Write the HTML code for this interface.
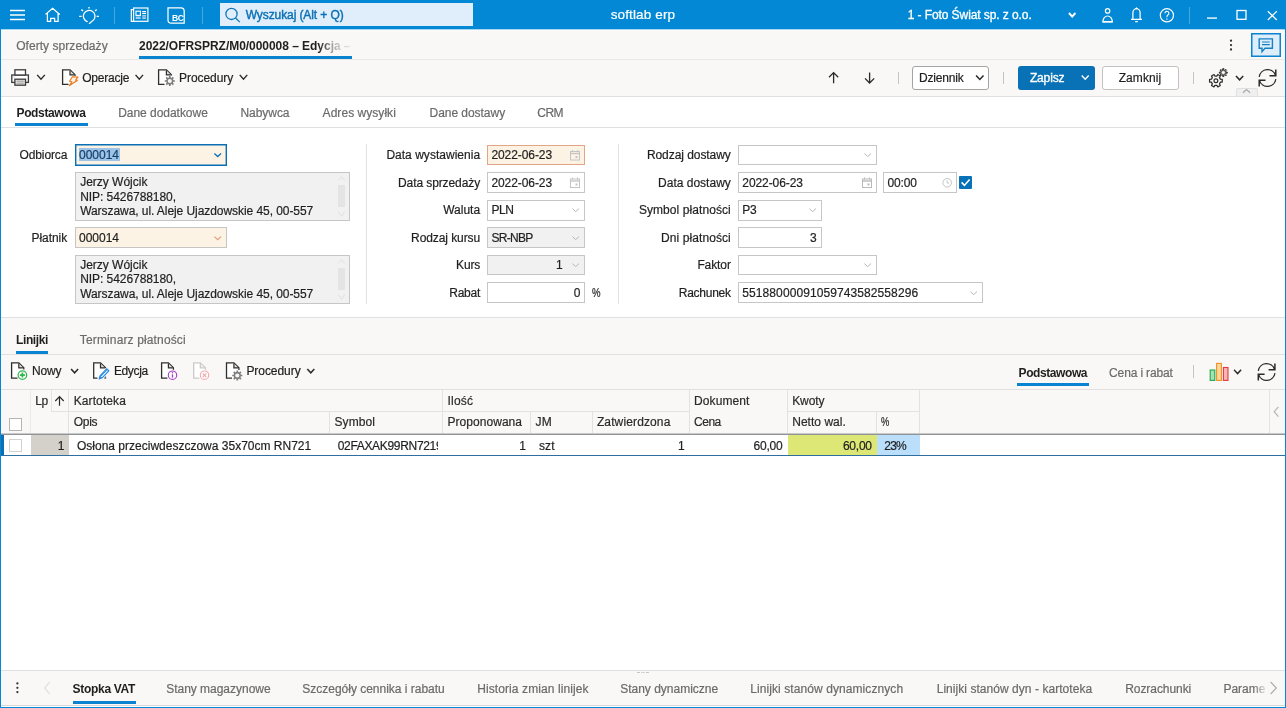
<!DOCTYPE html>
<html lang="pl">
<head>
<meta charset="utf-8">
<title>softlab erp</title>
<style>
*{box-sizing:border-box;margin:0;padding:0}
html,body{width:1286px;height:708px;overflow:hidden;background:#fff}
body{font-family:"Liberation Sans",sans-serif;font-size:12px;color:#1f1f1f;position:relative}
.a,.t{position:absolute}
.t{white-space:nowrap;line-height:16px;height:16px;transform-origin:0 50%;color:#1f1f1f;-webkit-text-stroke:.2px currentColor}
.b{font-weight:bold;-webkit-text-stroke:0}
.med{font-weight:normal;-webkit-text-stroke:.32px currentColor}
.g{color:#6a6a6a}
.hd{color:#2a2a2a}
.w{color:#fff}
.big{font-size:13.5px}
.srch{color:#0a6fb5;-webkit-text-stroke:.4px currentColor}
.fade{-webkit-mask-image:linear-gradient(90deg,#000 0,#000 84.5%,rgba(0,0,0,.7) 88%,rgba(0,0,0,.42) 91%,rgba(0,0,0,.22) 94.5%,rgba(0,0,0,.08) 100%);mask-image:linear-gradient(90deg,#000 0,#000 84.5%,rgba(0,0,0,.7) 88%,rgba(0,0,0,.42) 91%,rgba(0,0,0,.22) 94.5%,rgba(0,0,0,.08) 100%)}
.fadeR{-webkit-mask-image:linear-gradient(90deg,#000 0,#000 72%,transparent 108%);mask-image:linear-gradient(90deg,#000 0,#000 72%,transparent 108%)}
.clip{position:absolute;overflow:hidden;height:16px}
svg{position:absolute;overflow:visible}
.inp{position:absolute;height:22px;border:1px solid #c6c6c6;background:#fff}
.dis{background:#f1f1f1}
.req{background:#fdf3e4}
.ul{position:absolute;height:3px;background:#0a84d0}
.vl{position:absolute;width:1px;background:#e2e2e2}
.hl{position:absolute;height:1px;background:#e2e2e2}
.cb{position:absolute;width:13px;height:13px;background:#fff;border:1px solid #b4b4b4}
</style>
</head>
<body>
<div class="a" style="left:0px;top:0px;width:1286px;height:29px;background:#0288d4;"></div>
<div class="a" style="left:899px;top:0px;width:187px;height:30px;background:#0288d4;border-bottom:1px solid #0273bb"></div>
<div class="a" style="left:220px;top:3px;width:253px;height:23px;background:#dfeefa;"></div>
<div class="a" style="left:114px;top:7px;width:1px;height:17px;background:rgba(255,255,255,.28);"></div>
<div class="a" style="left:202px;top:7px;width:1px;height:17px;background:rgba(255,255,255,.28);"></div>
<div class="a" style="left:1189px;top:7px;width:1px;height:17px;background:rgba(255,255,255,.28);"></div>
<div class="a" style="left:0px;top:29px;width:1286px;height:1px;background:#a6d5f0;"></div>
<div class="a" style="left:0px;top:30px;width:1286px;height:1px;background:#fcfcfc;"></div>
<div class="a" style="left:0px;top:31px;width:1286px;height:29px;background:#f9f8f7;"></div>
<div class="hl" style="left:0px;top:59px;width:1286px;height:1px;background:#e9e8e7"></div>
<div class="ul" style="left:139px;top:56px;width:213px"></div>
<div class="a" style="left:1251px;top:33px;width:30px;height:24px;background:#ddedf9;border:1px solid #0a84d0;box-shadow:inset 0 0 0 .5px #0a84d0"></div>
<div class="a" style="left:0px;top:60px;width:1286px;height:36px;background:#f9f8f7;"></div>
<div class="hl" style="left:0px;top:96px;width:1286px;height:1px;background:#e0e0e0"></div>
<div class="a" style="left:1236px;top:88px;width:22px;height:8px;background:#efefef;border:1px solid #e0e0e0;border-bottom:none;border-radius:2px 2px 0 0"></div>
<div class="vl" style="left:898px;top:72px;height:12px;background:#c4c4c4"></div>
<div class="vl" style="left:1003px;top:72px;height:12px;background:#c4c4c4"></div>
<div class="vl" style="left:1193px;top:72px;height:12px;background:#c4c4c4"></div>
<div class="a" style="left:912px;top:66px;width:77px;height:24px;background:#fff;border:1px solid #a4a4a4;border-radius:3px"></div>
<div class="a" style="left:1018px;top:66px;width:77px;height:24px;background:#0971b5;border-radius:3px"></div>
<div class="a" style="left:1102px;top:66px;width:77px;height:24px;background:#fff;border:1px solid #c2c2c2;border-radius:3px"></div>
<div class="a" style="left:0px;top:97px;width:1286px;height:30px;background:#fff;"></div>
<div class="hl" style="left:0px;top:127px;width:1286px;height:1px;background:#e0e0e0"></div>
<div class="ul" style="left:15px;top:123px;width:73px"></div>
<div class="a" style="left:0px;top:128px;width:1286px;height:189px;background:#fff;"></div>
<div class="hl" style="left:0px;top:317px;width:1286px;height:1px;background:#e0e0e0"></div>
<div class="vl" style="left:366px;top:144px;height:160px;background:#e2e2e2"></div>
<div class="vl" style="left:618px;top:144px;height:160px;background:#e2e2e2"></div>
<div class="inp req" style="left:75px;top:144px;width:152px;height:22px;border-color:#0a6fb5;box-shadow:inset 0 0 0 .4px #0a6fb5"></div>
<div class="a" style="left:79px;top:148px;width:41px;height:13px;background:#9dc3e6;"></div>
<div class="a" style="left:75px;top:172px;width:275px;height:49px;background:#f1f1f1;border:1px solid #c6c6c6"></div>
<div class="inp req" style="left:75px;top:227px;width:152px;height:21px;"></div>
<div class="a" style="left:75px;top:255px;width:275px;height:49px;background:#f1f1f1;border:1px solid #c6c6c6"></div>
<div class="a" style="left:338px;top:185px;width:7px;height:22px;background:#e4e4e4;"></div>
<div class="a" style="left:338px;top:268px;width:7px;height:22px;background:#e4e4e4;"></div>
<div class="inp req" style="left:487px;top:145px;width:98px;height:20px;border-color:#e2a585"></div>
<div class="inp " style="left:487px;top:172px;width:98px;height:21px;"></div>
<div class="inp " style="left:487px;top:200px;width:98px;height:21px;"></div>
<div class="inp dis" style="left:487px;top:227px;width:98px;height:21px;"></div>
<div class="inp dis" style="left:487px;top:255px;width:98px;height:20px;"></div>
<div class="inp " style="left:487px;top:282px;width:98px;height:21px;"></div>
<div class="inp " style="left:738px;top:145px;width:139px;height:20px;"></div>
<div class="inp " style="left:738px;top:172px;width:139px;height:21px;"></div>
<div class="inp " style="left:883px;top:172px;width:74px;height:21px;"></div>
<div class="inp " style="left:738px;top:200px;width:84px;height:21px;"></div>
<div class="inp " style="left:738px;top:227px;width:84px;height:21px;"></div>
<div class="inp " style="left:738px;top:255px;width:139px;height:20px;"></div>
<div class="inp " style="left:738px;top:282px;width:245px;height:21px;"></div>
<div class="a" style="left:959px;top:176px;width:13px;height:13px;background:#0971b5;border-radius:1px"></div>
<div class="a" style="left:0px;top:318px;width:1286px;height:36px;background:#f9f8f7;"></div>
<div class="hl" style="left:0px;top:354px;width:1286px;height:1px;background:#e0e0e0"></div>
<div class="ul" style="left:16px;top:351px;width:32px"></div>
<div class="a" style="left:0px;top:355px;width:1286px;height:34px;background:#f9f8f7;"></div>
<div class="hl" style="left:0px;top:389px;width:1286px;height:1px;background:#e0e0e0"></div>
<div class="ul" style="left:1017px;top:383px;width:72px"></div>
<div class="vl" style="left:1193px;top:365px;height:13px;background:#c4c4c4"></div>
<div class="a" style="left:0px;top:390px;width:1286px;height:44px;background:#f9f8f7;"></div>
<div class="vl" style="left:68px;top:390px;height:44px;background:#e2e2e2"></div>
<div class="vl" style="left:442px;top:390px;height:44px;background:#e2e2e2"></div>
<div class="vl" style="left:689px;top:390px;height:44px;background:#e2e2e2"></div>
<div class="vl" style="left:787px;top:390px;height:44px;background:#e2e2e2"></div>
<div class="vl" style="left:919px;top:390px;height:44px;background:#e2e2e2"></div>
<div class="vl" style="left:30px;top:390px;height:44px;background:#ebebeb"></div>
<div class="vl" style="left:51px;top:390px;height:21px;background:#e2e2e2"></div>
<div class="vl" style="left:329px;top:412px;height:22px;background:#e2e2e2"></div>
<div class="vl" style="left:530px;top:412px;height:22px;background:#e2e2e2"></div>
<div class="vl" style="left:592px;top:412px;height:22px;background:#e2e2e2"></div>
<div class="vl" style="left:876px;top:412px;height:22px;background:#e2e2e2"></div>
<div class="hl" style="left:51px;top:411px;width:638px;height:1px;background:#e2e2e2"></div>
<div class="hl" style="left:787px;top:411px;width:132px;height:1px;background:#e2e2e2"></div>
<div class="vl" style="left:1269px;top:390px;height:44px;background:#e2e2e2"></div>
<div class="a" style="left:0px;top:433px;width:1286px;height:1px;background:#c9c9c9;"></div>
<div class="a" style="left:0px;top:434px;width:1286px;height:1px;background:#8f9496;"></div>
<div class="cb" style="left:9px;top:418px"></div>
<div class="a" style="left:0px;top:435px;width:1286px;height:235px;background:#fff;"></div>
<div class="a" style="left:0px;top:455px;width:1286px;height:1px;background:#2f6f9f;"></div>
<div class="a" style="left:31px;top:435px;width:38px;height:20px;background:#d4d0ca;"></div>
<div class="a" style="left:788px;top:435px;width:89px;height:20px;background:#dce775;"></div>
<div class="a" style="left:877px;top:435px;width:43px;height:20px;background:#bbdefb;"></div>
<div class="a" style="left:1px;top:435px;width:3px;height:20px;background:#0a6fb5;"></div>
<div class="cb" style="left:9px;top:439px;border-color:#d2d2d2"></div>
<div class="hl" style="left:0px;top:670px;width:1286px;height:1px;background:#e0e0e0"></div>
<div class="a" style="left:0px;top:671px;width:1286px;height:35px;background:#f9f8f7;"></div>
<div class="ul" style="left:73px;top:701px;width:63px"></div>
<div class="hl" style="left:0px;top:705px;width:1286px;height:1px;background:#d8d8d8"></div>
<div class="a" style="left:637px;top:672px;width:3px;height:1px;background:#c6c6c6;"></div>
<div class="a" style="left:641px;top:672px;width:4px;height:1px;background:#d4d4d4;"></div>
<div class="a" style="left:646px;top:672px;width:3px;height:1px;background:#c6c6c6;"></div>
<svg class="a" style="left:0;top:0" width="1286" height="708" viewBox="0 0 1286 708" fill="none" ><path d="M10 10.5 H25 M10 19.5 H25" stroke="#fff" stroke-width="1.3"/><path d="M10 15 H25" stroke="#fff" stroke-opacity=".75" stroke-width="2"/><path d="M45.5 14.4 L52.6 8.3 L59.8 14.4 M47.4 13.2 V21.3 H50.7 V18.3 H54.6 V21.3 H58.1 V13.2" stroke="#fff" stroke-width="1.25" stroke-linejoin="miter"/><path d="M87.2 21.6 A5.8 5.8 0 1 1 93.6 19.9 L89.4 23.4" stroke="#fff" stroke-width="1.3" stroke-linecap="round"/><path d="M89 7 V8.4 M81.4 9.6 L83 11 M96.6 9.6 L95.2 11 M79.2 16.4 H81.6 M96.6 16.4 H98.9" stroke="#fff" stroke-width="1.4"/><rect x="133.6" y="8" width="14.3" height="13.3" stroke="#fff" stroke-width="1.2"/><path d="M133.6 9.6 H131.3 V21.3 H133.6" stroke="#fff" stroke-width="1.2"/><rect x="136" y="11.2" width="4.4" height="4.2" stroke="#fff" stroke-width="1.1"/><path d="M142.2 11.6 H146 M142.2 13.5 H146" stroke="#fff" stroke-width="1.1"/><path d="M142.2 15.6 H146 M142.2 17 H146 M142.2 18.4 H146 M135.7 17.1 H140.6 M135.7 18.4 H140.6" stroke="#fff" stroke-opacity=".6" stroke-width="1.1"/><path d="M168 7.9 H181 A3.2 3.2 0 0 1 184.2 11.1 V23.2 H171.2 A3.2 3.2 0 0 1 168 20 Z" stroke="#fff" stroke-width="1.25"/><circle cx="231.5" cy="13.9" r="5.6" stroke="#1277b5" stroke-width="1.3"/><path d="M235.6 18 L239.8 22.1" stroke="#1277b5" stroke-width="1.3"/><path d="M1069 13 L1072.2 16.6 L1075.4 13" stroke="#fff" stroke-width="2" stroke-linejoin="miter"/><circle cx="1107.6" cy="10.9" r="2.2" stroke="#fff" stroke-width="1.2"/><path d="M1102.9 21.6 A4.7 5.6 0 0 1 1112.3 21.6 Z" stroke="#fff" stroke-width="1.2"/><path d="M1102.5 21.8 H1112.7" stroke="#fff" stroke-width="1.6"/><path d="M1132.9 19.2 V13 A3.6 4.4 0 0 1 1140.1 13 V19.2 M1131 19.3 H1142 M1135.2 21.7 H1137.8" stroke="#fff" stroke-width="1.25"/><path d="M1135.6 8.8 L1136.5 7.6 L1137.4 8.8Z" fill="#fff" stroke="#fff" stroke-width=".8"/><circle cx="1166.9" cy="15.3" r="6.6" stroke="#fff" stroke-width="1.2"/><path d="M1164.9 13.3 A2 2 0 1 1 1167.6 15.2 Q1166.9 15.8 1166.9 17.2 M1166.9 18.6 V19.8" stroke="#fff" stroke-width="1.1"/><path d="M1207 18.1 H1217" stroke="#fff" stroke-opacity=".85" stroke-width="1.6"/><rect x="1237" y="10.5" width="9" height="8.8" stroke="#fff" stroke-width="1.3"/><path d="M1267.8 11.2 L1276.8 20 M1276.8 11.2 L1267.8 20" stroke="#fff" stroke-width="1.2"/><circle cx="1231" cy="40.7" r="1.15" fill="#333"/><circle cx="1231" cy="45.1" r="1.15" fill="#333"/><circle cx="1231" cy="49.5" r="1.15" fill="#333"/><path d="M1259.2 38.9 H1272.4 V48.3 H1265 L1262 51.6 V48.3 H1259.2Z" stroke="#1580c4" stroke-width="1.4" stroke-linejoin="miter"/><path d="M1262 42 H1269.8 M1262 44.6 H1269.8" stroke="#1580c4" stroke-width="1.1"/><rect x="11.8" y="75" width="16.6" height="7.4" fill="#fff" stroke="#3a3a3a" stroke-width="1.3"/><rect x="14.9" y="69.8" width="10.6" height="5.2" fill="#fff" stroke="#3a3a3a" stroke-width="1.3"/><rect x="14.9" y="79.2" width="10.6" height="6" fill="#e6e6e6" stroke="#3a3a3a" stroke-width="1.3"/><path d="M16.6 81.2 H23.8 M16.6 83.2 H23.8" stroke="#9a9a9a" stroke-width="1"/><rect x="13.4" y="76.4" width="1.6" height="1.2" fill="#b9dcf5"/><path d="M37.6 75.4 L41.0 79.2 L44.4 75.4" stroke="#2a2a2a" stroke-width="1.4" stroke-linecap="square" stroke-linejoin="miter"/><path d="M62.6 69.8 H70 L75 74.8 V84.4 H62.6Z" fill="#fff"/><path d="M68.5 84.4 H62.6 V69.8 H70 L75 74.8 V76" stroke="#2e2e2e" stroke-width="1.3" stroke-linejoin="miter"/><path d="M70 70.39999999999999 V74.8 H74.4" fill="#dcdcdc" stroke="#2e2e2e" stroke-width="1.2" stroke-linejoin="miter"/><path d="M72.4 76.7 L77.9 77.1 L75.6 80.2 L77.3 80.4 L69.4 85.6 L71.9 81.7 L69.6 81.3 Z" fill="#fff3e6" stroke="#e8791d" stroke-width="1.15" stroke-linejoin="round"/><path d="M136 75.4 L139.3 79.2 L142.6 75.4" stroke="#2a2a2a" stroke-width="1.4" stroke-linecap="square" stroke-linejoin="miter"/><path d="M158.6 69.8 H166.4 L171.4 74.8 V84.4 H158.6Z" fill="#fff"/><path d="M164.5 84.4 H158.6 V69.8 H166.4 L171.4 74.8 V75.5" stroke="#2e2e2e" stroke-width="1.3" stroke-linejoin="miter"/><path d="M166.4 70.39999999999999 V74.8 H170.8" fill="#dcdcdc" stroke="#2e2e2e" stroke-width="1.2" stroke-linejoin="miter"/><path d="M168.63 77.59 L168.93 77.51 L168.96 75.97 L170.64 75.97 L170.67 77.51 L171.38 77.77 L171.66 77.92 L172.77 76.85 L173.95 78.03 L172.88 79.14 L173.21 79.83 L173.29 80.13 L174.83 80.16 L174.83 81.84 L173.29 81.87 L173.03 82.58 L172.88 82.86 L173.95 83.97 L172.77 85.15 L171.66 84.08 L170.97 84.41 L170.67 84.49 L170.64 86.03 L168.96 86.03 L168.93 84.49 L168.22 84.23 L167.94 84.08 L166.83 85.15 L165.65 83.97 L166.72 82.86 L166.39 82.17 L166.31 81.87 L164.77 81.84 L164.77 80.16 L166.31 80.13 L166.57 79.42 L166.72 79.14 L165.65 78.03 L166.83 76.85 L167.94 77.92Z" fill="#7c7c7c"/><circle cx="169.8" cy="81" r="2.1" fill="#f9f8f7"/><path d="M240.2 75.4 L243.5 79.2 L246.8 75.4" stroke="#2a2a2a" stroke-width="1.4" stroke-linecap="square" stroke-linejoin="miter"/><path d="M833.6 83.2 V72.8 M829 77.2 L833.6 72.6 L838.2 77.2" stroke="#2a2a2a" stroke-width="1.3"/><path d="M869.6 72.4 V82.8 M865 78.4 L869.6 83 L874.2 78.4" stroke="#2a2a2a" stroke-width="1.3"/><path d="M976.6 76 L979.8 79.4 L983 76" stroke="#2a2a2a" stroke-width="1.5" stroke-linecap="square" stroke-linejoin="miter"/><path d="M1082.2 76 L1085.2 79.2 L1088.2 76" stroke="#fff" stroke-width="1.4" stroke-linecap="square" stroke-linejoin="miter"/><path d="M1216.29 76.02 L1216.83 76.09 L1217.84 74.50 L1220.30 75.92 L1219.43 77.59 L1220.15 78.70 L1220.35 79.20 L1222.24 79.28 L1222.24 82.12 L1220.35 82.20 L1219.76 83.38 L1219.43 83.81 L1220.30 85.48 L1217.84 86.90 L1216.83 85.31 L1215.51 85.38 L1214.97 85.31 L1213.96 86.90 L1211.50 85.48 L1212.37 83.81 L1211.65 82.70 L1211.45 82.20 L1209.56 82.12 L1209.56 79.28 L1211.45 79.20 L1212.04 78.02 L1212.37 77.59 L1211.50 75.92 L1213.96 74.50 L1214.97 76.09Z" stroke="#2e2e2e" stroke-width="1.25" stroke-linejoin="round"/><circle cx="1215.9" cy="80.7" r="1.9" stroke="#2e2e2e" stroke-width="1.2"/><path d="M1222.49 70.23 L1222.75 70.16 L1222.72 68.64 L1223.88 68.64 L1223.85 70.16 L1224.40 70.35 L1224.63 70.48 L1225.69 69.39 L1226.51 70.21 L1225.42 71.27 L1225.67 71.79 L1225.74 72.05 L1227.26 72.02 L1227.26 73.18 L1225.74 73.15 L1225.55 73.70 L1225.42 73.93 L1226.51 74.99 L1225.69 75.81 L1224.63 74.72 L1224.11 74.97 L1223.85 75.04 L1223.88 76.56 L1222.72 76.56 L1222.75 75.04 L1222.20 74.85 L1221.97 74.72 L1220.91 75.81 L1220.09 74.99 L1221.18 73.93 L1220.93 73.41 L1220.86 73.15 L1219.34 73.18 L1219.34 72.02 L1220.86 72.05 L1221.05 71.50 L1221.18 71.27 L1220.09 70.21 L1220.91 69.39 L1221.97 70.48Z" stroke="#2e2e2e" stroke-width="1" stroke-linejoin="round" fill="#2e2e2e" fill-opacity=".55"/><circle cx="1223.3" cy="72.6" r="1.5" fill="#f9f8f7"/><path d="M1236.5 76.6 L1239.6 79.8 L1242.7 76.6" stroke="#2a2a2a" stroke-width="1.5" stroke-linecap="square" stroke-linejoin="miter"/><path d="M1259.18 76.83 A8.4 8.4 0 0 1 1275.53 75.54" stroke="#2a2a2a" stroke-width="1.3"/><path d="M1275.80 69.60 V75.74 H1269.50" stroke="#2a2a2a" stroke-width="1.5" stroke-linejoin="miter"/><path d="M1275.82 79.17 A8.4 8.4 0 0 1 1259.47 80.46" stroke="#2a2a2a" stroke-width="1.3"/><path d="M1259.20 86.40 V80.26 H1265.50" stroke="#2a2a2a" stroke-width="1.5" stroke-linejoin="miter"/><path d="M1243 92.8 L1246.5 89.6 L1250 92.8" stroke="#a8a8a8" stroke-width="1.2"/><path d="M214.4 153.6 L217.7 156.6 L221 153.6" stroke="#0a6fb5" stroke-width="1.3"/><path d="M214.4 236.6 L217.7 239.6 L221 236.6" stroke="#e0a07c" stroke-width="1.2"/><path d="M572.4 208.6 L575.7 211.6 L579 208.6" stroke="#b8b8b8" stroke-width="1"/><path d="M572.4 236.6 L575.7 239.6 L579 236.6" stroke="#b8b8b8" stroke-width="1"/><path d="M572.4 263.6 L575.7 266.6 L579 263.6" stroke="#b8b8b8" stroke-width="1"/><path d="M864.4 153.6 L867.7 156.6 L871 153.6" stroke="#b8b8b8" stroke-width="1"/><path d="M809.4 208.6 L812.7 211.6 L816 208.6" stroke="#b8b8b8" stroke-width="1"/><path d="M864.4 263.6 L867.7 266.6 L871 263.6" stroke="#b8b8b8" stroke-width="1"/><path d="M970.4 291.6 L973.7 294.6 L977 291.6" stroke="#b8b8b8" stroke-width="1"/><rect x="570.5" y="151.5" width="9" height="8.5" stroke="#c4c4c4" stroke-width="1"/><path d="M570.5 153.5 H579.5" stroke="#c4c4c4" stroke-width="1.4"/><path d="M572.5 150 V152 M577.5 150 V152" stroke="#c4c4c4" stroke-width="1"/><rect x="575.5" y="156" width="2" height="2" fill="#c4c4c4"/><rect x="570.5" y="179.0" width="9" height="8.5" stroke="#c4c4c4" stroke-width="1"/><path d="M570.5 181.0 H579.5" stroke="#c4c4c4" stroke-width="1.4"/><path d="M572.5 177.5 V179.5 M577.5 177.5 V179.5" stroke="#c4c4c4" stroke-width="1"/><rect x="575.5" y="183.5" width="2" height="2" fill="#c4c4c4"/><rect x="862.5" y="179.0" width="9" height="8.5" stroke="#b9b9b9" stroke-width="1"/><path d="M862.5 181.0 H871.5" stroke="#b9b9b9" stroke-width="1.4"/><path d="M864.5 177.5 V179.5 M869.5 177.5 V179.5" stroke="#b9b9b9" stroke-width="1"/><rect x="867.5" y="183.5" width="2" height="2" fill="#b9b9b9"/><circle cx="947.2" cy="182.8" r="4.3" stroke="#c4c4c4" stroke-width="1"/><path d="M947.2 180.4 V183 H949.2" stroke="#c4c4c4" stroke-width="1"/><path d="M961.6 182.4 L964.4 185.4 L969.6 179.4" stroke="#fff" stroke-width="1.6"/><path d="M338.3 180.5 L341.5 176.7 L344.7 180.5 M338.3 211.5 L341.5 216.3 L344.7 211.5" stroke="#e0e0e0" stroke-width="1"/><path d="M338.3 263.5 L341.5 259.7 L344.7 263.5 M338.3 294.5 L341.5 299.3 L344.7 294.5" stroke="#e0e0e0" stroke-width="1"/></svg>
<svg class="a" style="left:0;top:0" width="1286" height="708" viewBox="0 0 1286 708" fill="none" ><path d="M11.6 362.8 H18.8 L23.8 367.8 V378.2 H11.6Z" fill="#fff"/><path d="M17.5 378.2 H11.6 V362.8 H18.8 L23.8 367.8 V369.5" stroke="#2e2e2e" stroke-width="1.3" stroke-linejoin="miter"/><path d="M18.8 363.40000000000003 V367.8 H23.2" fill="#dcdcdc" stroke="#2e2e2e" stroke-width="1.2" stroke-linejoin="miter"/><circle cx="22.4" cy="375.1" r="4.3" fill="#fff" stroke="#2db64a" stroke-width="1.2"/><path d="M22.4 372.6 V377.6 M19.9 375.1 H24.9" stroke="#2db64a" stroke-width="1.7"/><path d="M71.6 369.6 L74.6 372.8 L77.6 369.6" stroke="#2a2a2a" stroke-width="1.5" stroke-linecap="square" stroke-linejoin="miter"/><path d="M93.7 362.8 H100.5 L105.5 367.8 V378.2 H93.7Z" fill="#fff"/><path d="M97.5 378.2 H93.7 V362.8 H100.5 L105.5 367.8 V368.2" stroke="#2e2e2e" stroke-width="1.3" stroke-linejoin="miter"/><path d="M100.5 363.40000000000003 V367.8 H104.9" fill="#dcdcdc" stroke="#2e2e2e" stroke-width="1.2" stroke-linejoin="miter"/><path d="M104.2 378.2 H105.5 V376.4" stroke="#6a6a6a" stroke-width="1.3"/><path d="M99.2 379 L100 375.8 L106.6 368.8 L108.8 370.8 L102.2 377.8 Z" fill="#dbeeff" stroke="#2b8be0" stroke-width="1.2" stroke-linejoin="round"/><path d="M101 376 L107.4 369.4" stroke="#2b8be0" stroke-width="1"/><path d="M99.2 379 L100 375.8 L102.2 377.8Z" fill="#2b8be0"/><path d="M161.6 362.8 H168.4 L173.4 367.8 V378.2 H161.6Z" fill="#fff"/><path d="M167.4 378.2 H161.6 V362.8 H168.4 L173.4 367.8 V369.8" stroke="#2e2e2e" stroke-width="1.3" stroke-linejoin="miter"/><path d="M168.4 363.40000000000003 V367.8 H172.8" fill="#dcdcdc" stroke="#2e2e2e" stroke-width="1.2" stroke-linejoin="miter"/><circle cx="172.5" cy="375.2" r="4.2" fill="#fff" stroke="#a23cc4" stroke-width="1.1"/><path d="M172.5 374.4 V377.6" stroke="#a23cc4" stroke-width="1.3"/><circle cx="172.5" cy="372.8" r=".75" fill="#a23cc4"/><path d="M193.7 362.8 H200.3 L205.3 367.8 V378.2 H193.7Z" fill="#fff"/><path d="M199.4 378.2 H193.7 V362.8 H200.3 L205.3 367.8 V369.8" stroke="#c9c9c9" stroke-width="1.3" stroke-linejoin="miter"/><path d="M200.3 363.40000000000003 V367.8 H204.70000000000002" fill="#f2f2f2" stroke="#c9c9c9" stroke-width="1.2" stroke-linejoin="miter"/><circle cx="204.5" cy="375.2" r="4.2" fill="#fff" stroke="#f6a9a9" stroke-width="1.1"/><path d="M202.7 373.4 L206.3 377 M206.3 373.4 L202.7 377" stroke="#f6a9a9" stroke-width="1.1"/><path d="M226.5 362.8 H233.9 L238.9 367.8 V378.2 H226.5Z" fill="#fff"/><path d="M232 378.2 H226.5 V362.8 H233.9 L238.9 367.8 V370" stroke="#2e2e2e" stroke-width="1.3" stroke-linejoin="miter"/><path d="M233.9 363.40000000000003 V367.8 H238.3" fill="#dcdcdc" stroke="#2e2e2e" stroke-width="1.2" stroke-linejoin="miter"/><path d="M236.13 372.09 L236.43 372.01 L236.46 370.47 L238.14 370.47 L238.17 372.01 L238.88 372.27 L239.16 372.42 L240.27 371.35 L241.45 372.53 L240.38 373.64 L240.71 374.33 L240.79 374.63 L242.33 374.66 L242.33 376.34 L240.79 376.37 L240.53 377.08 L240.38 377.36 L241.45 378.47 L240.27 379.65 L239.16 378.58 L238.47 378.91 L238.17 378.99 L238.14 380.53 L236.46 380.53 L236.43 378.99 L235.72 378.73 L235.44 378.58 L234.33 379.65 L233.15 378.47 L234.22 377.36 L233.89 376.67 L233.81 376.37 L232.27 376.34 L232.27 374.66 L233.81 374.63 L234.07 373.92 L234.22 373.64 L233.15 372.53 L234.33 371.35 L235.44 372.42Z" fill="#7c7c7c"/><circle cx="237.3" cy="375.5" r="2.1" fill="#f9f8f7"/><path d="M307.8 369.6 L310.8 372.8 L313.8 369.6" stroke="#2a2a2a" stroke-width="1.5" stroke-linecap="square" stroke-linejoin="miter"/><rect x="1210.2" y="370" width="4.6" height="10.4" fill="#a6e0b0" stroke="#1fa84a" stroke-width="1.1"/><rect x="1216.6" y="363.4" width="4.8" height="17" fill="#fbd89a" stroke="#f0902a" stroke-width="1.1"/><rect x="1223.4" y="367.5" width="4.6" height="12.9" fill="#f6b4b4" stroke="#e23b3b" stroke-width="1.1"/><path d="M1234.6 370.4 L1237.6 373.6 L1240.6 370.4" stroke="#2a2a2a" stroke-width="1.5" stroke-linecap="square" stroke-linejoin="miter"/><path d="M1258.28 370.83 A8.4 8.4 0 0 1 1274.63 369.54" stroke="#2a2a2a" stroke-width="1.3"/><path d="M1274.90 363.60 V369.74 H1268.60" stroke="#2a2a2a" stroke-width="1.5" stroke-linejoin="miter"/><path d="M1274.92 373.17 A8.4 8.4 0 0 1 1258.57 374.46" stroke="#2a2a2a" stroke-width="1.3"/><path d="M1258.30 380.40 V374.26 H1264.60" stroke="#2a2a2a" stroke-width="1.5" stroke-linejoin="miter"/><path d="M59.5 405.8 V396.6 M55.3 401 L59.5 396.6 L63.7 401" stroke="#2a2a2a" stroke-width="1.2"/><path d="M1278.4 406.8 L1274.2 411.7 L1278.4 416.6" stroke="#b6b6b6" stroke-width="1.2"/><circle cx="17.4" cy="683.4" r="1.15" fill="#333"/><circle cx="17.4" cy="687.8" r="1.15" fill="#333"/><circle cx="17.4" cy="692.1" r="1.15" fill="#333"/><path d="M49.6 682 L44.6 688 L49.6 694" stroke="#e0e0e0" stroke-width="1.2"/><path d="M1270.6 682 L1276.4 688 L1270.6 694" stroke="#b0b0b0" stroke-width="1.2"/></svg>
<div class="a" id="txt" style="left:0;top:0;width:1286px;height:708px;will-change:transform">
<span class="t w b" style="left:172px;top:9.9px;font-size:8.5px;letter-spacing:-.5px;-webkit-text-stroke:0">BC</span>
<span class="t srch" style="left:245.7px;top:7.1px;letter-spacing:-0.088px;">Wyszukaj (Alt + Q)</span>
<span class="t w big" style="left:610.7px;top:7.4px;letter-spacing:0.132px;">softlab erp</span>
<span class="t w med" style="left:907.7px;top:7.1px;letter-spacing:-0.083px;">1 - Foto Świat sp. z o.o.</span>
<span class="t g" style="left:16.2px;top:38.1px;letter-spacing:0.050px;">Oferty sprzedaży</span>
<span class="t b fade" style="left:139.0px;top:38.1px;letter-spacing:-0.039px;">2022/OFRSPRZ/M0/000008 – Edycja –</span>
<span class="t " style="left:82.2px;top:69.9px;letter-spacing:-0.213px;">Operacje</span>
<span class="t " style="left:179.0px;top:69.9px;letter-spacing:-0.056px;">Procedury</span>
<span class="t " style="left:918.9px;top:69.9px;letter-spacing:-0.154px;">Dziennik</span>
<span class="t w med" style="left:1029.9px;top:69.9px;letter-spacing:-0.141px;">Zapisz</span>
<span class="t " style="left:1118.7px;top:69.9px;letter-spacing:0.083px;">Zamknij</span>
<span class="t b" style="left:16.5px;top:105.1px;letter-spacing:-0.359px;">Podstawowa</span>
<span class="t g" style="left:118.2px;top:105.1px;letter-spacing:-0.034px;">Dane dodatkowe</span>
<span class="t g" style="left:240.5px;top:105.1px;letter-spacing:-0.051px;">Nabywca</span>
<span class="t g" style="left:322.6px;top:105.1px;letter-spacing:0.047px;">Adres wysyłki</span>
<span class="t g" style="left:429.5px;top:105.1px;letter-spacing:-0.037px;">Dane dostawy</span>
<span class="t g" style="left:537.3px;top:105.1px;letter-spacing:-0.576px;">CRM</span>
<span class="t " style="left:19.5px;top:147.1px;letter-spacing:-0.113px;">Odbiorca</span>
<span class="t " style="left:79.1px;top:147.1px;letter-spacing:-0.041px;color:#14406c;">000014</span>
<span class="t " style="left:80.2px;top:173.9px;letter-spacing:-0.012px;">Jerzy Wójcik</span>
<span class="t " style="left:80.2px;top:188.5px;letter-spacing:-0.059px;">NIP: 5426788180,</span>
<span class="t " style="left:80.2px;top:202.9px;letter-spacing:-0.064px;">Warszawa, ul. Aleje Ujazdowskie 45, 00-557</span>
<span class="t " style="left:31.5px;top:229.9px;letter-spacing:-0.062px;">Płatnik</span>
<span class="t " style="left:79.1px;top:229.9px;letter-spacing:-0.041px;">000014</span>
<span class="t " style="left:80.2px;top:256.9px;letter-spacing:-0.012px;">Jerzy Wójcik</span>
<span class="t " style="left:80.2px;top:271.3px;letter-spacing:-0.059px;">NIP: 5426788180,</span>
<span class="t " style="left:80.2px;top:285.9px;letter-spacing:-0.064px;">Warszawa, ul. Aleje Ujazdowskie 45, 00-557</span>
<span class="t " style="left:386.4px;top:147.3px;letter-spacing:0.020px;">Data wystawienia</span>
<span class="t " style="left:398.0px;top:174.9px;letter-spacing:-0.091px;">Data sprzedaży</span>
<span class="t " style="left:443.2px;top:202.1px;letter-spacing:-0.001px;">Waluta</span>
<span class="t " style="left:411.1px;top:229.7px;letter-spacing:-0.086px;">Rodzaj kursu</span>
<span class="t " style="left:456.1px;top:257.1px;letter-spacing:-0.172px;">Kurs</span>
<span class="t " style="left:449.2px;top:284.7px;letter-spacing:-0.226px;">Rabat</span>
<span class="t " style="left:491.4px;top:147.3px;letter-spacing:-0.079px;">2022-06-23</span>
<span class="t " style="left:491.4px;top:174.9px;letter-spacing:-0.079px;">2022-06-23</span>
<span class="t " style="left:491.4px;top:202.1px;letter-spacing:-0.448px;">PLN</span>
<span class="t " style="left:491.4px;top:229.7px;letter-spacing:-0.674px;">SR-NBP</span>
<span class="t " style="left:555.9px;top:257.1px;letter-spacing:-0.987px;">1</span>
<span class="t " style="left:573.7px;top:284.7px;letter-spacing:-0.188px;">0</span>
<span class="t " style="left:591.5px;top:284.7px;transform:scaleX(.8);">%</span>
<span class="t " style="left:646.9px;top:147.3px;letter-spacing:-0.058px;">Rodzaj dostawy</span>
<span class="t " style="left:658.1px;top:174.9px;letter-spacing:-0.000px;">Data dostawy</span>
<span class="t " style="left:638.9px;top:202.1px;letter-spacing:0.074px;">Symbol płatności</span>
<span class="t " style="left:661.1px;top:229.9px;letter-spacing:0.077px;">Dni płatności</span>
<span class="t " style="left:697.4px;top:257.3px;letter-spacing:-0.103px;">Faktor</span>
<span class="t " style="left:678.8px;top:284.7px;letter-spacing:-0.256px;">Rachunek</span>
<span class="t " style="left:742.3px;top:174.9px;letter-spacing:-0.079px;">2022-06-23</span>
<span class="t " style="left:887.4px;top:174.9px;letter-spacing:-0.146px;">00:00</span>
<span class="t " style="left:742.3px;top:202.1px;letter-spacing:-0.394px;">P3</span>
<span class="t " style="left:809.9px;top:229.9px;letter-spacing:-0.388px;">3</span>
<span class="t " style="left:742.3px;top:284.7px;letter-spacing:0.091px;">55188000091059743582558296</span>
<span class="t b" style="left:16.1px;top:332.3px;letter-spacing:-0.425px;">Linijki</span>
<span class="t g" style="left:79.8px;top:332.3px;letter-spacing:0.138px;">Terminarz płatności</span>
<span class="t " style="left:32.0px;top:363.1px;letter-spacing:-0.179px;">Nowy</span>
<span class="t " style="left:113.9px;top:363.1px;letter-spacing:-0.355px;">Edycja</span>
<span class="t " style="left:246.4px;top:363.1px;letter-spacing:-0.056px;">Procedury</span>
<span class="t b" style="left:1018.6px;top:365.1px;letter-spacing:-0.419px;">Podstawowa</span>
<span class="t g" style="left:1109.1px;top:365.1px;letter-spacing:-0.148px;">Cena i rabat</span>
<span class="t hd" style="left:35.2px;top:392.9px;letter-spacing:-0.480px;">Lp</span>
<span class="t hd" style="left:73.7px;top:392.9px;letter-spacing:0.103px;">Kartoteka</span>
<span class="t hd" style="left:447.4px;top:392.9px;letter-spacing:0.263px;">Ilość</span>
<span class="t hd" style="left:694.1px;top:392.9px;letter-spacing:0.075px;">Dokument</span>
<span class="t hd" style="left:792.2px;top:392.9px;letter-spacing:-0.078px;">Kwoty</span>
<span class="t hd" style="left:73.7px;top:414.1px;letter-spacing:-0.247px;">Opis</span>
<span class="t hd" style="left:334.5px;top:414.1px;letter-spacing:0.081px;">Symbol</span>
<span class="t hd" style="left:447.4px;top:414.1px;letter-spacing:0.058px;">Proponowana</span>
<span class="t hd" style="left:535.4px;top:414.1px;letter-spacing:0.450px;">JM</span>
<span class="t hd" style="left:596.9px;top:414.1px;letter-spacing:0.129px;">Zatwierdzona</span>
<span class="t hd" style="left:694.1px;top:414.1px;letter-spacing:-0.522px;">Cena</span>
<span class="t hd" style="left:792.2px;top:414.1px;letter-spacing:0.034px;">Netto wal.</span>
<span class="t hd" style="left:881.2px;top:414.1px;transform:scaleX(.78);">%</span>
<span class="t " style="left:57.7px;top:438.1px;letter-spacing:-1.987px;">1</span>
<span class="t " style="left:77.0px;top:438.1px;letter-spacing:0.002px;">Osłona przeciwdeszczowa 35x70cm RN721</span>
<span class="t " style="left:519.3px;top:438.1px;letter-spacing:-1.987px;">1</span>
<span class="t " style="left:539.0px;top:438.1px;letter-spacing:0.085px;">szt</span>
<span class="t " style="left:678.1px;top:438.1px;letter-spacing:-1.987px;">1</span>
<span class="t " style="left:753.6px;top:438.1px;letter-spacing:-0.226px;">60,00</span>
<span class="t " style="left:842.9px;top:438.1px;letter-spacing:-0.226px;">60,00</span>
<span class="t " style="left:884.2px;top:438.1px;letter-spacing:-0.710px;">23%</span>
<span class="t b" style="left:72.6px;top:681.1px;letter-spacing:-0.306px;">Stopka VAT</span>
<span class="t g" style="left:166.2px;top:681.1px;letter-spacing:-0.021px;">Stany magazynowe</span>
<span class="t g" style="left:302.3px;top:681.1px;letter-spacing:-0.013px;">Szczegóły cennika i rabatu</span>
<span class="t g" style="left:477.2px;top:681.1px;letter-spacing:0.097px;">Historia zmian linijek</span>
<span class="t g" style="left:620.2px;top:681.1px;letter-spacing:-0.004px;">Stany dynamiczne</span>
<span class="t g" style="left:750.2px;top:681.1px;letter-spacing:0.084px;">Linijki stanów dynamicznych</span>
<span class="t g" style="left:936.7px;top:681.1px;letter-spacing:0.047px;">Linijki stanów dyn - kartoteka</span>
<span class="t g" style="left:1125.2px;top:681.1px;letter-spacing:-0.064px;">Rozrachunki</span>
<div class="clip " style="left:337.7px;top:438.1px;width:100.6px"><span class="t" style="left:0;top:0;letter-spacing:-0.320px;color:inherit">02FAXAK99RN7219</span></div>
<div class="clip g fadeR" style="left:1223.5px;top:681.1px;width:41.5px"><span class="t" style="left:0;top:0;letter-spacing:-0.040px;color:inherit">Parametry</span></div>
</div>
<div class="a" style="left:0px;top:29px;width:1px;height:679px;background:#0288d4;"></div>
<div class="a" style="left:1284.5px;top:29px;width:1.5px;height:679px;background:#0288d4;"></div>
<div class="a" style="left:0px;top:706.5px;width:1286px;height:1.5px;background:#0288d4;"></div>
</body>
</html>
